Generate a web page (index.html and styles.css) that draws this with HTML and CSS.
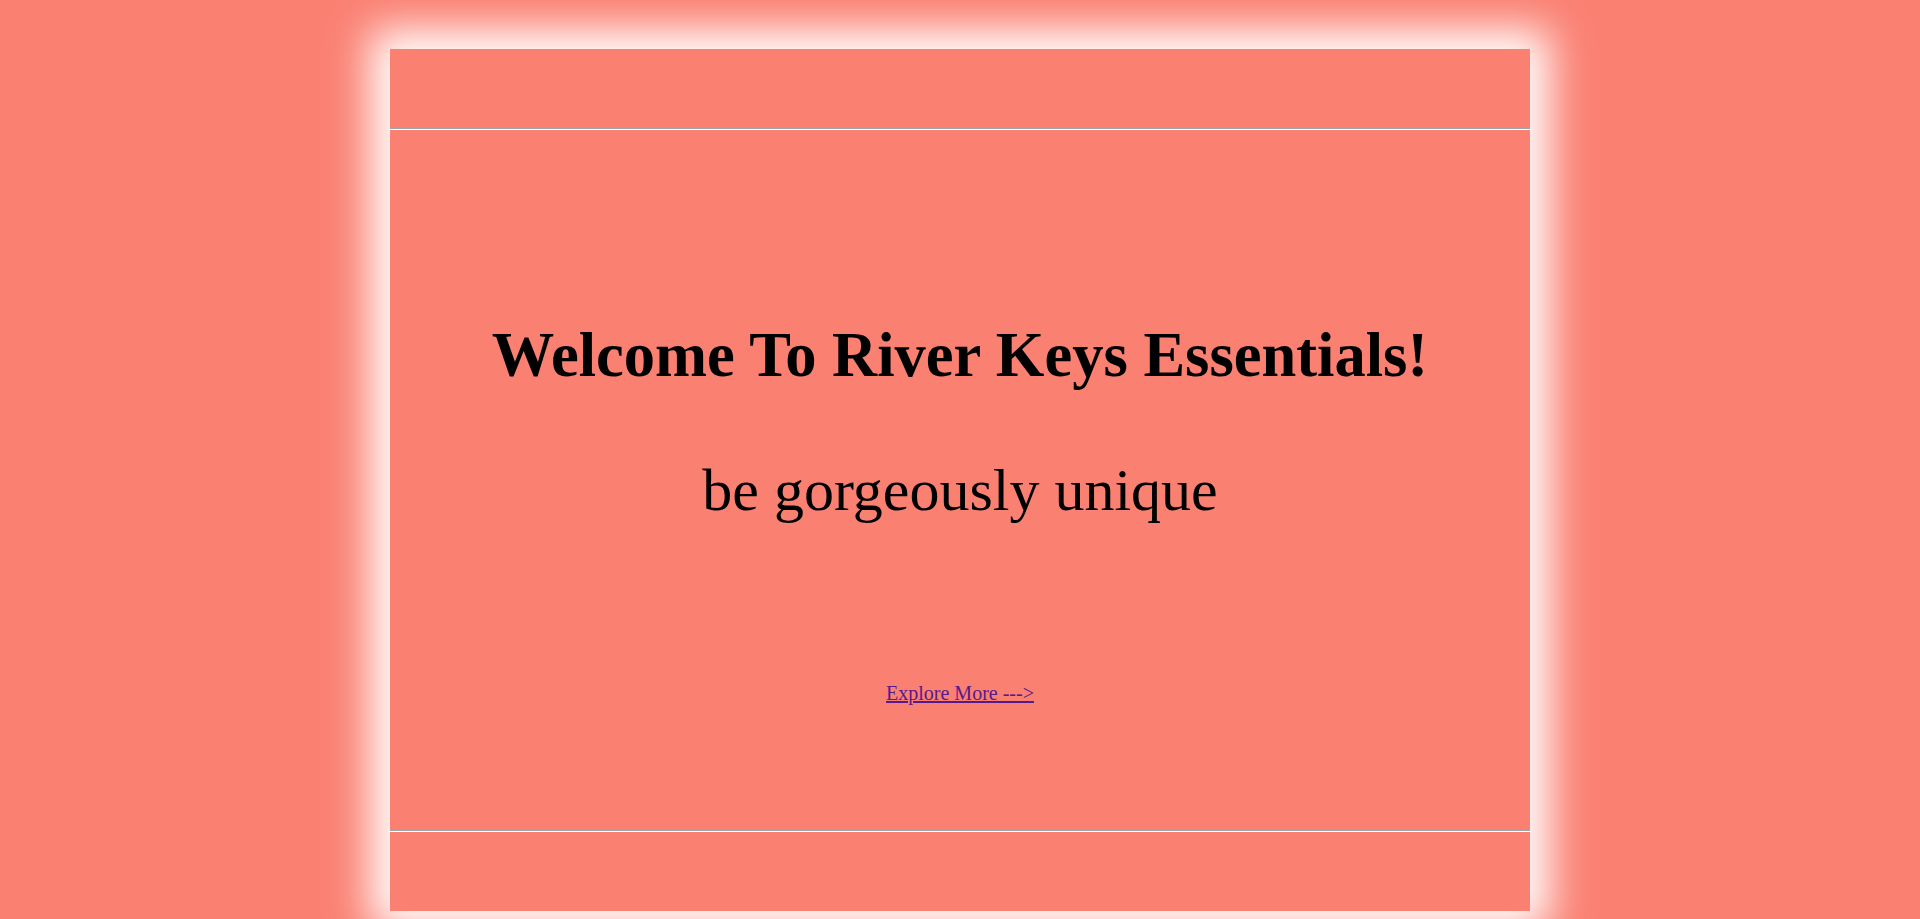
FILE: index.html
```html
<!DOCTYPE html>
<html lang="en">
<head>
<meta charset="utf-8">
<title>River Keys Essentials</title>
<link rel="stylesheet" href="styles.css">
</head>
<body>
<div class="page">
  <header class="top"></header>
  <main class="hero">
    <h1 class="title">Welcome To River Keys Essentials!</h1>
    <p class="tagline">be gorgeously unique</p>
    <a class="explore" href="#">Explore More ---&gt;</a>
  </main>
  <footer class="bottom"></footer>
</div>
</body>
</html>
```

FILE: styles.css
```css
html, body {
  margin: 0;
  padding: 0;
}
body {
  background: #fa8072;
  font-family: "Liberation Serif", "Times New Roman", serif;
  color: #000;
  height: 919px;
  overflow: hidden;
}
.page {
  width: 1140px;
  margin: 49px auto 0;
  background: #fa8072;
  box-shadow: 0 0 40px 20px #ffffff;
  display: flex;
  flex-direction: column;
}
.top {
  height: 79px;
  border-bottom: 1px solid #9aa6ae;
}
.hero {
  height: 702px;
  box-sizing: border-box;
  border-top: 1px solid #ffffff;
  border-bottom: 1px solid #9aa6ae;
  display: flex;
  flex-direction: column;
  align-items: center;
  padding-top: 189px;
}
.title {
  margin: 0;
  font-size: 62.5px;
  font-weight: bold;
  line-height: normal;
}
.tagline {
  margin: 64px 0 0;
  font-size: 60px;
  line-height: normal;
}
.explore {
  margin-top: 157px;
  font-size: 20px;
  color: #551a8b;
  text-decoration: underline;
}
.bottom {
  height: 79px;
  border-top: 1px solid #ffffff;
}
```
